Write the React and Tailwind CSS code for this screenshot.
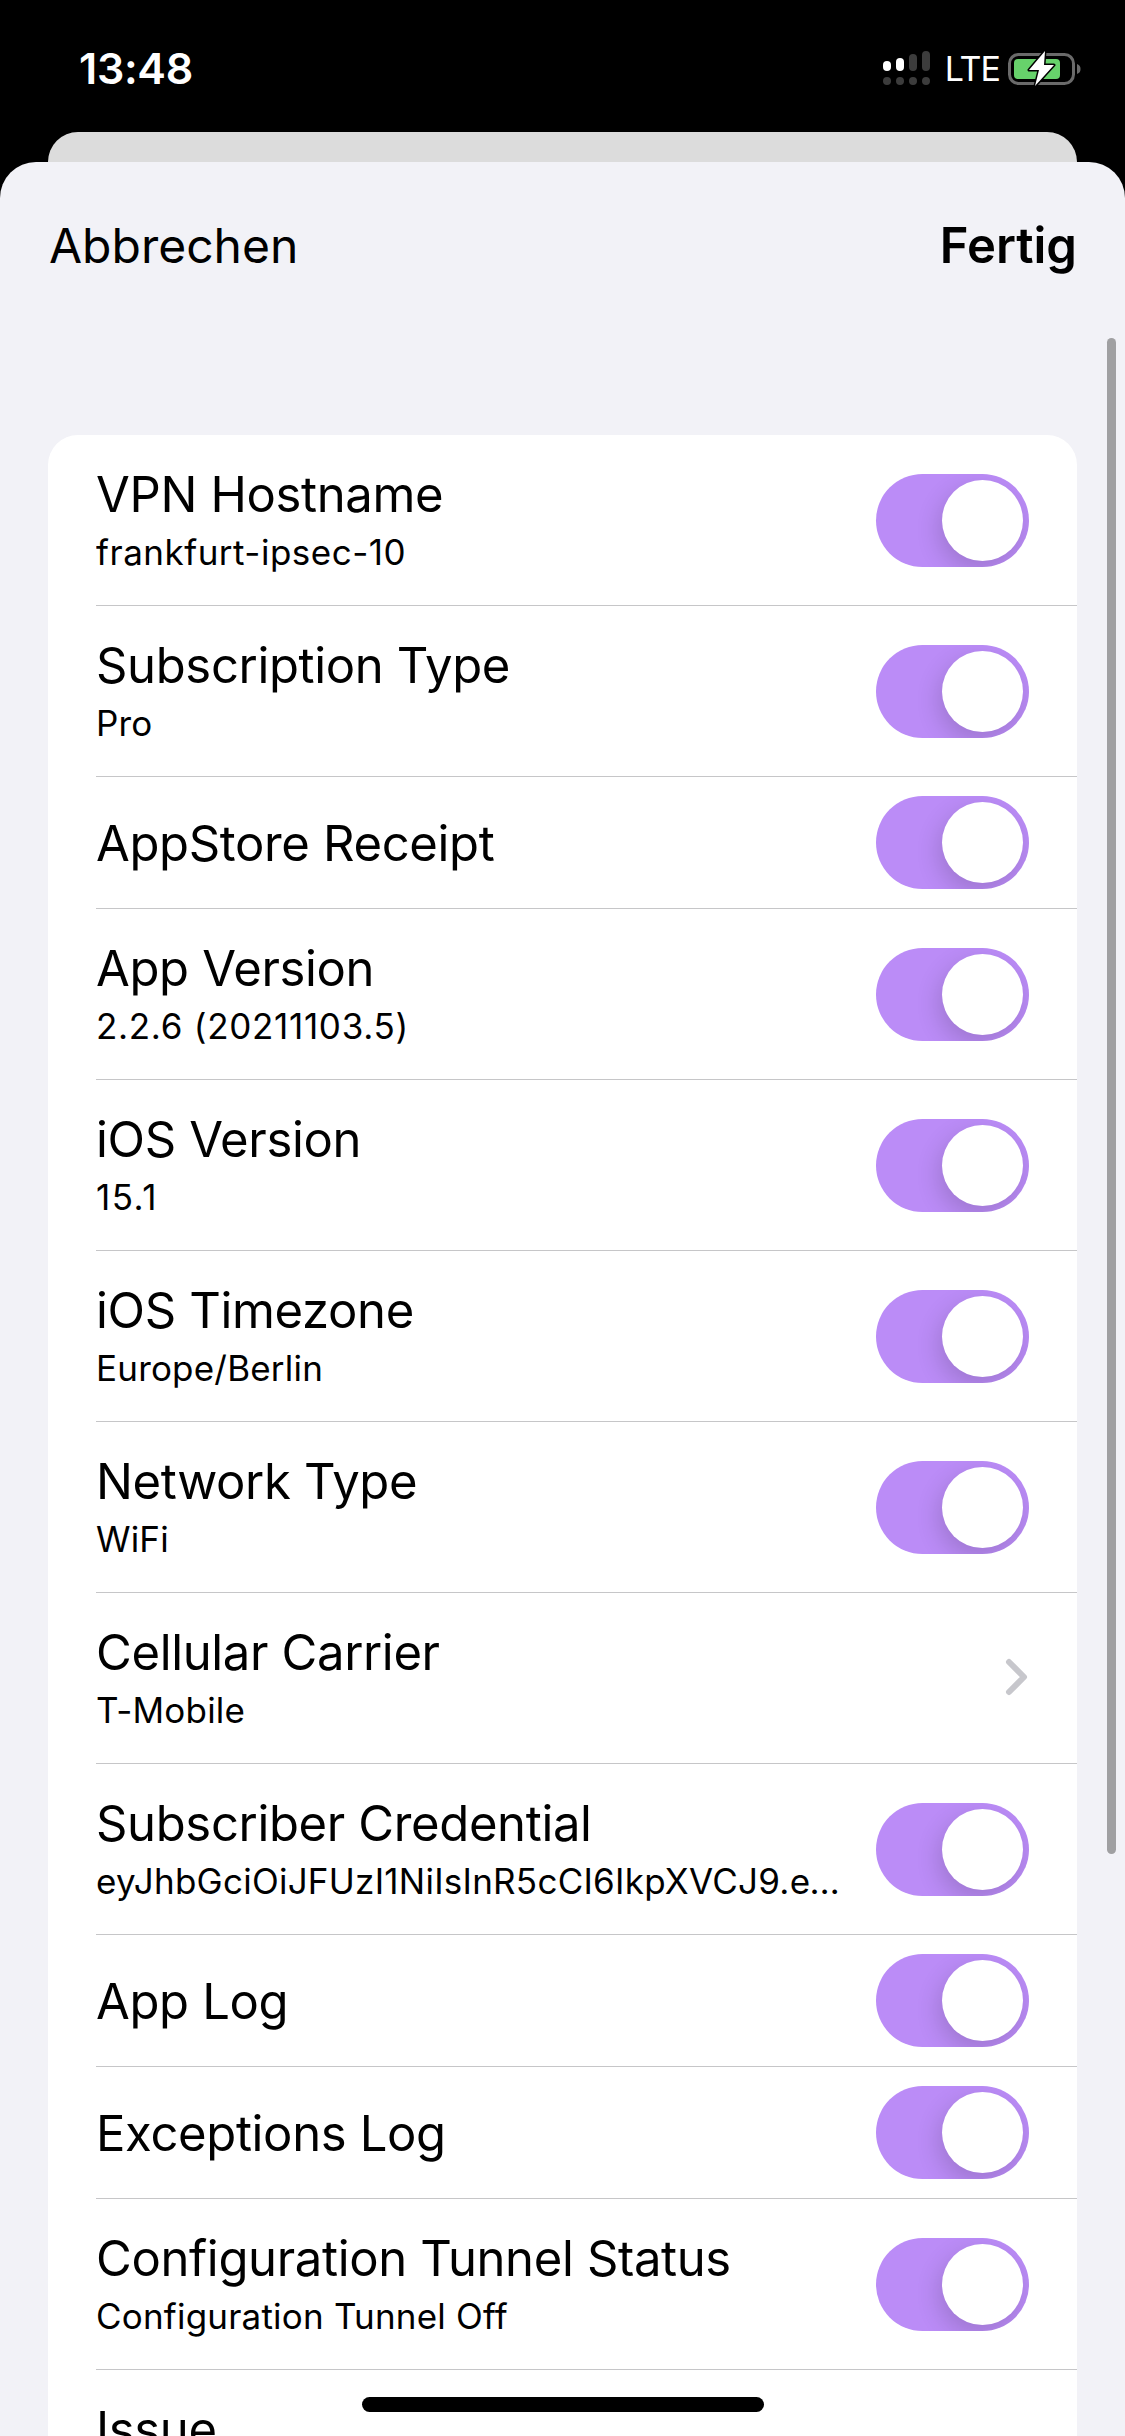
import React from "react";

const rows = [
  { title: "VPN Hostname", sub: "frankfurt-ipsec-10", subCls: "tracking-[0.5px]" },
  { title: "Subscription Type", sub: "Pro", subCls: "tracking-[0.2px]" },
  { title: "AppStore Receipt" },
  { title: "App Version", sub: "2.2.6 (20211103.5)", subCls: "tracking-[0.7px]" },
  { title: "iOS Version", sub: "15.1", subCls: "tracking-[1.5px]" },
  { title: "iOS Timezone", sub: "Europe/Berlin", subCls: "tracking-[0.2px]" },
  { title: "Network Type", sub: "WiFi", subCls: "tracking-[0.2px]" },
  { title: "Cellular Carrier", sub: "T-Mobile", subCls: "tracking-[0.2px]", chevron: true },
  { title: "Subscriber Credential", sub: "eyJhbGciOiJFUzI1NiIsInR5cCI6IkpXVCJ9.eyJhdWQiOiJhcHAiLCJleHAiOjE2Mzk", subCls: "tracking-[0.25px]" },
  { title: "App Log" },
  { title: "Exceptions Log" },
  { title: "Configuration Tunnel Status", sub: "Configuration Tunnel Off", subCls: "tracking-[0.2px]" },
  { title: "Issue", sub: "\u00a0", noToggle: true },
];

function Toggle() {
  return (
    <div className="relative w-[153px] h-[93px] rounded-full bg-[#bb8cf7] overflow-hidden shrink-0 flex items-center justify-end pr-[6px]">
      <div className="w-[81px] h-[81px] rounded-full bg-white shadow-[-3px_9px_24px_rgba(0,0,0,0.16)]" />
    </div>
  );
}

function Chevron() {
  return (
    <svg width="24" height="40" viewBox="0 0 24 40" className="shrink-0">
      <path d="M4 4 L19 19 L4 34" fill="none" stroke="#c7c7cc" strokeWidth="6" strokeLinecap="round" strokeLinejoin="round" />
    </svg>
  );
}

function Row({ title, sub, subCls, chevron, noToggle }) {
  return (
    <div className={`flex items-center justify-between pr-[48px] border-b border-[#c6c6c8] ${sub ? "h-[171px]" : "h-[132px]"}`}>
      <div className={`min-w-0 w-[752px] flex flex-col ${sub ? "pb-[3px]" : "pt-[2px]"}`}>
        <div className="text-[49px] leading-[60px] tracking-[-0.35px] text-black">{title}</div>
        {sub && <div className={`text-[35px] leading-[42px] mt-[6px] text-black truncate ${subCls || ""}`}>{sub}</div>}
      </div>
      {chevron ? <Chevron /> : noToggle ? null : <Toggle />}
    </div>
  );
}

function StatusIcons() {
  return (
    <div className="flex items-center mt-[5px]">
      <svg width="47" height="36" viewBox="0 0 47 36" className="mr-[15px]">
        <rect x="0" y="10" width="8" height="10" rx="4" fill="#fff" />
        <rect x="13" y="7" width="8" height="13" rx="4" fill="#fff" />
        <rect x="26" y="3" width="8" height="17" rx="4" fill="#3c3c3c" />
        <rect x="39" y="0" width="8" height="20" rx="4" fill="#3c3c3c" />
        <circle cx="4" cy="30" r="4" fill="#3c3c3c" />
        <circle cx="17" cy="30" r="4" fill="#3c3c3c" />
        <circle cx="30" cy="30" r="4" fill="#3c3c3c" />
        <circle cx="43" cy="30" r="4" fill="#3c3c3c" />
      </svg>
      <span className="text-[34px] leading-[36px] text-white tracking-[-1px] mr-[8px]">LTE</span>
      <svg width="74" height="36" viewBox="0 0 74 36">
        <rect x="1.5" y="3.5" width="64" height="29" rx="9" fill="none" stroke="#6a6a6a" strokeWidth="3" />
        <rect x="6" y="8" width="46" height="20" rx="4" fill="#67d26b" />
        <path d="M69 13 C72 14 72.5 16 72.5 18 C72.5 20 72 22 69 23 Z" fill="#6a6a6a" />
        <path d="M37 0 L21 19 L31 19 L27 35 L46 14 L36 14 Z" fill="#fff" stroke="#000" strokeWidth="3" strokeLinejoin="round" paintOrder="stroke" />
      </svg>
    </div>
  );
}

export default function App() {
  return (
    <div className="relative w-[1125px] h-[2436px] overflow-hidden bg-black font-['Inter','Liberation_Sans',sans-serif]">
      <div className="flex items-center justify-between h-[132px] pl-[79px] pr-[43px]">
        <span className="text-[43px] leading-none font-semibold tracking-[-0.3px] text-white mt-[4px]">13:48</span>
        <StatusIcons />
      </div>
      <div className="mx-[48px] h-[60px] rounded-t-[30px] bg-[#dcdcdc]" />
      <div className="-mt-[30px] relative h-[2274px] rounded-t-[36px] bg-[#f2f2f7] overflow-hidden">
        <div className="flex items-center justify-between h-[168px] pl-[49px] pr-[48px]">
          <span className="text-[48px] tracking-[0px] text-black">Abbrechen</span>
          <span className="text-[49px] font-semibold tracking-[0px] text-black">Fertig</span>
        </div>
        <div className="mx-[48px] mt-[105px] bg-white rounded-t-[30px] pl-[48px]">
          {rows.map((r) => (
            <Row key={r.title} {...r} />
          ))}
        </div>
        <div className="absolute left-[1107px] top-[176px] w-[9px] h-[1516px] rounded-full bg-[#a0a0a2]" />
      </div>
      <div className="absolute left-[362px] top-[2397px] w-[402px] h-[15px] rounded-full bg-black" />
    </div>
  );
}
